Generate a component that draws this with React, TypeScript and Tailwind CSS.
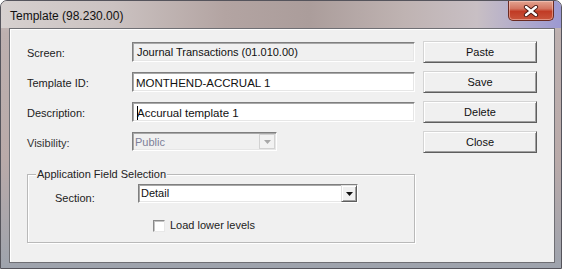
import React from "react";

const font = { fontFamily: '"Liberation Sans", Arial, sans-serif' };

function Sunken({ className = "", children }: { className?: string; children?: React.ReactNode }) {
  return (
    <div
      className={
        "border border-t-[#7f7f7f] border-l-[#7f7f7f] border-b-white border-r-white shadow-[inset_1px_1px_0_#a8a8a8,inset_-1px_-1px_0_#e6e6e6] " +
        className
      }
    >
      {children}
    </div>
  );
}

function Btn({ label }: { label: string }) {
  return (
    <div className="h-[22px] w-[114px] flex items-center justify-center text-[11px] text-[#111] bg-[#f0f0f0] border border-t-[#d4d4d4] border-l-[#d4d4d4] border-b-[#5e5e5e] border-r-[#5e5e5e] shadow-[inset_1px_1px_0_#ffffff,inset_-1px_-1px_0_#a0a0a0]">
      {label}
    </div>
  );
}

function Arrow({ color }: { color: string }) {
  return (
    <svg width="7" height="4" viewBox="0 0 7 4">
      <path d="M0 0H7L3.5 4Z" fill={color} />
    </svg>
  );
}

export default function App() {
  return (
    <div
      className="w-[562px] h-[269px] flex flex-col rounded-t-[7px] border border-[#55545c] bg-[linear-gradient(180deg,#cfc7c7_0%,#bdb0af_12%,#b9aaa9_60%,#9ea3ad_100%)] overflow-hidden"
      style={font}
    >
      <div className="h-[27px] flex items-start justify-between pl-[9px] pr-[6px] bg-[linear-gradient(90deg,#d6d0cf_0%,#cbc2c1_20%,#b3a4a2_40%,#ab9d9b_55%,#bfb3b2_72%,#c8bfc4_85%,#9c99d2_100%)]">
        <div className="pt-[8px] text-[12px] leading-[14px] text-[#111]">Template (98.230.00)</div>
        <div className="mr-[1px] w-[46px] h-[20px] flex items-center justify-center rounded-b-[5px] border border-t-0 border-[#6b2a22] bg-[linear-gradient(180deg,#e3a491_0%,#d37561_40%,#c13b25_55%,#c9553c_100%)] shadow-[inset_0_0_0_1px_rgba(255,220,210,0.45)]">
          <svg width="16" height="12" viewBox="0 0 16 12">
            <path d="M3 2L13 10M13 2L3 10" stroke="#4a1a14" strokeWidth="4.2" strokeLinecap="round" />
            <path d="M3 2L13 10M13 2L3 10" stroke="#ffffff" strokeWidth="2.4" strokeLinecap="round" />
          </svg>
        </div>
      </div>

      <div className="ml-[8px] mr-[6px] h-[235px] bg-[#f0f0f0] border border-[#6f6f74] shadow-[inset_1px_1px_0_#ffffff] pl-[17px] pt-[13px]">
        <div className="flex">
          <div className="w-[388px]">
            <div className="h-[30px] flex items-start">
              <div className="w-[105px] h-[20px] pt-[5px] text-[11px] leading-[13px] text-[#222]">Screen:</div>
              <Sunken className="w-[283px] h-[20px] bg-[#f0f0f0] pl-[4px] pt-[3px] text-[11px] leading-[13px] text-[#111]">
                Journal Transactions (01.010.00)
              </Sunken>
            </div>
            <div className="h-[30px] flex items-start">
              <div className="w-[105px] h-[20px] pt-[5px] text-[11px] leading-[13px] text-[#222]">Template ID:</div>
              <Sunken className="w-[283px] h-[20px] bg-white pl-[3px] pt-[3px] text-[11.5px] leading-[14px] text-[#111]">
                MONTHEND-ACCRUAL 1
              </Sunken>
            </div>
            <div className="h-[30px] flex items-start">
              <div className="w-[105px] h-[20px] pt-[5px] text-[11px] leading-[13px] text-[#222]">Description:</div>
              <Sunken className="w-[283px] h-[20px] bg-white pl-[4px] pt-[3px] text-[11.5px] leading-[14px] text-[#111] flex">
                <span className="w-px h-[14px] bg-black -mr-px"></span>
                <span>Accurual template 1</span>
              </Sunken>
            </div>
            <div className="h-[30px] flex items-start">
              <div className="w-[105px] h-[20px] pt-[5px] text-[11px] leading-[13px] text-[#333]">Visibility:</div>
              <Sunken className="w-[145px] h-[19px] bg-[#f0f0f0] flex items-stretch">
                <div className="flex-1 pl-[2px] pt-[3px] text-[11px] leading-[13px] text-[#7d7f99]">Public</div>
                <div className="w-[16px] my-[1px] mr-[1px] flex items-center justify-center border border-[#d2d2d2] bg-[#f2f2f2]">
                  <Arrow color="#a8a8a8" />
                </div>
              </Sunken>
            </div>
          </div>
          <div className="ml-[8px] flex flex-col gap-[8px] -mt-[1px]">
            <Btn label="Paste" />
            <Btn label="Save" />
            <Btn label="Delete" />
            <Btn label="Close" />
          </div>
        </div>

        <div className="relative mt-[12px] w-[388px] h-[69px] border border-[#b9b9b9] shadow-[inset_1px_1px_0_#ffffff,1px_1px_0_#ffffff] pt-[9px] pl-[27px]">
          <div className="absolute -top-[8px] left-[8px] px-[1px] bg-[#f0f0f0] text-[11px] leading-[14px] text-[#222]">
            Application Field Selection
          </div>
          <div className="flex items-start">
            <div className="w-[83px] pt-[8px] text-[11px] leading-[13px] text-[#222]">Section:</div>
            <Sunken className="w-[220px] h-[19px] bg-white flex items-stretch">
              <div className="flex-1 pl-[2px] pt-[2px] text-[11px] leading-[13px] text-[#111]">Detail</div>
              <div className="w-[16px] flex items-center justify-center bg-[#f0f0f0] border border-t-[#e0e0e0] border-l-[#e0e0e0] border-b-[#5e5e5e] border-r-[#5e5e5e] shadow-[inset_1px_1px_0_#ffffff,inset_-1px_-1px_0_#a0a0a0]">
                <Arrow color="#111" />
              </div>
            </Sunken>
          </div>
          <div className="mt-[14px] ml-[98px] flex items-center">
            <div className="w-[12px] h-[12px] bg-white border border-t-[#8a8a8a] border-l-[#8a8a8a] border-b-[#e8e8e8] border-r-[#e8e8e8] shadow-[inset_1px_1px_0_#c4c4c4]"></div>
            <div className="ml-[5px] text-[11px] leading-[13px] text-[#222]">Load lower levels</div>
          </div>
        </div>
      </div>
    </div>
  );
}
